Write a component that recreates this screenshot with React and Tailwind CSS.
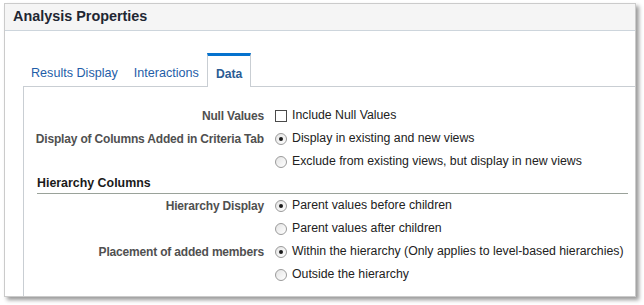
import React from 'react';

function Radio({ checked }) {
  return (
    <span className="w-[12px] h-[12px] rounded-full border border-[#9a9a9a] bg-gradient-to-br from-[#e4e4e4] to-white flex items-center justify-center shrink-0">
      {checked && <span className="w-[4px] h-[4px] rounded-full bg-[#1a1a1a]" />}
    </span>
  );
}

function Checkbox() {
  return <span className="w-[12px] h-[12px] border border-[#4a4a4a] bg-white shrink-0" />;
}

function Row({ label, children }) {
  return (
    <div className="flex items-center h-[23px]">
      <div className="w-[240px] text-right font-bold text-[12px] tracking-[-0.18px] text-[#505050]">{label}</div>
      <div className="ml-[11px] flex items-center gap-[5px] text-[12.3px] text-[#222]">{children}</div>
    </div>
  );
}

export default function App() {
  const tabs = ['Results Display', 'Interactions', 'Data'];
  return (
    <div className="w-[644px] h-[305px] bg-white pt-[3px] pl-[4px] text-[12px]" style={{ fontFamily: '"Liberation Sans", Arial, sans-serif' }}>
      <div className="w-[632px] h-[294px] border border-[#cbcbcb] bg-white shadow-[3px_3px_4px_rgba(0,0,0,0.4)] flex flex-col overflow-hidden">
        <div className="h-[27px] bg-[#f5f5f5] border-b border-[#cdd5dc] flex items-center pl-[8px] shrink-0">
          <span className="text-[14.4px] font-bold text-[#1f2733]">Analysis Properties</span>
        </div>
        <div className="ml-[18px] mt-[21px] flex items-end shrink-0 text-[12.6px]">
          {tabs.map((t) =>
            t === 'Data' ? (
              <div key={t} className="h-[34px] border-t-[3px] border-x border-t-[#0572ce] border-x-[#c9ced3] bg-white px-[8px] pt-[9px] font-bold text-[12.2px] text-[#2b5c94] -mb-px relative z-10">
                {t}
              </div>
            ) : (
              <div key={t} className="h-[34px] px-[8px] pt-[12px] text-[#1f5ea8]">
                {t}
              </div>
            )
          )}
        </div>
        <div className="ml-[18px] flex-1 border-t border-l border-[#c9ced3] pt-[17px] pr-[7px]">
          <Row label="Null Values">
            <Checkbox />
            <span>Include Null Values</span>
          </Row>
          <Row label="Display of Columns Added in Criteria Tab">
            <Radio checked />
            <span>Display in existing and new views</span>
          </Row>
          <Row label="">
            <Radio />
            <span>Exclude from existing views, but display in new views</span>
          </Row>
          <div className="ml-[13px] h-[21px] flex items-end border-b border-[#9aa29a] font-bold text-[#1a1a1a] text-[12.4px]">
            Hierarchy Columns
          </div>
          <Row label="Hierarchy Display">
            <Radio checked />
            <span>Parent values before children</span>
          </Row>
          <Row label="">
            <Radio />
            <span>Parent values after children</span>
          </Row>
          <Row label="Placement of added members">
            <Radio checked />
            <span>Within the hierarchy (Only applies to level-based hierarchies)</span>
          </Row>
          <Row label="">
            <Radio />
            <span>Outside the hierarchy</span>
          </Row>
        </div>
      </div>
    </div>
  );
}
